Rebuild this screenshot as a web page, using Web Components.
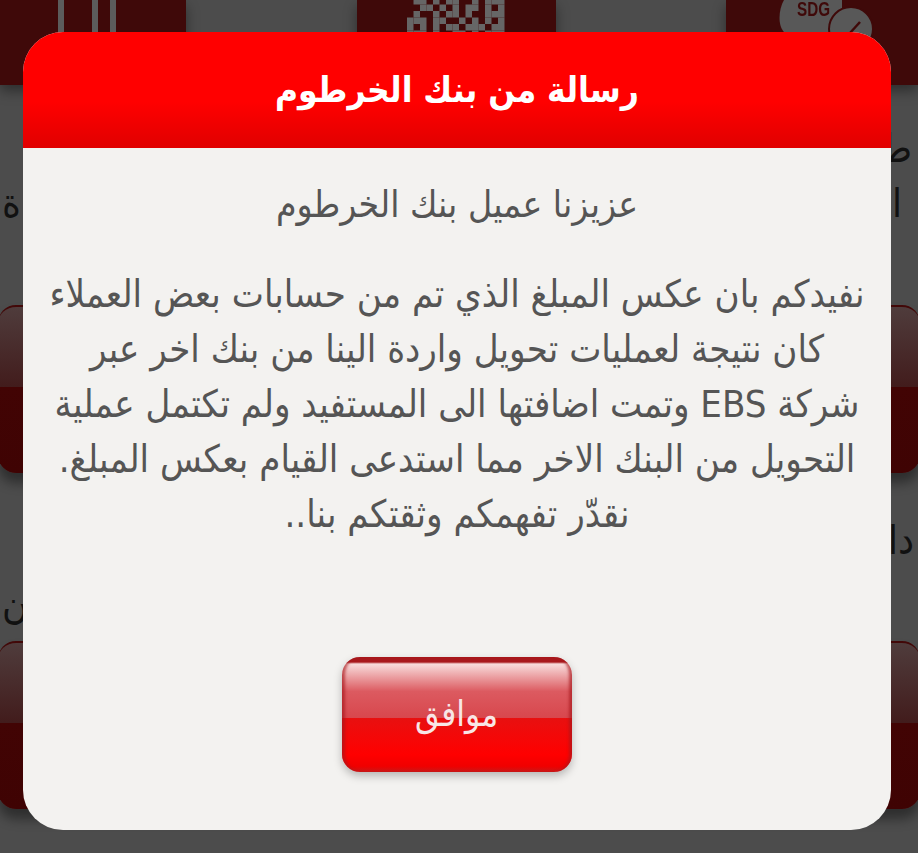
<!DOCTYPE html>
<html lang="ar">
<head>
<meta charset="utf-8">
<title>Message</title>
<style>
  html, body {
    height: 853px;
    margin: 0;
    overflow: hidden;
    width: 918px;
  }

  body {
    background: #4c4c4c;
    font-family: 'DejaVu Sans Condensed', 'DejaVu Sans', sans-serif;
    position: relative;
  }
</style>
</head>
<body>
  <kb-backdrop></kb-backdrop>
  <kb-dialog heading="رسالة من بنك الخرطوم" action="موافق">
    <p class="lead">عزيزنا عميل بنك الخرطوم</p>
    <p>نفيدكم بان عكس المبلغ الذي تم من حسابات بعض العملاء<br>كان نتيجة لعمليات تحويل واردة الينا من بنك اخر عبر<br>شركة EBS وتمت اضافتها الى المستفيد ولم تكتمل عملية<br>التحويل من البنك الاخر مما استدعى القيام بعكس المبلغ.<br>نقدّر تفهمكم وثقتكم بنا..</p>
  </kb-dialog>

<script>
// Dimmed wide menu button behind the dialog
class KbTile extends HTMLElement {
  constructor() {
    super();
    this.attachShadow( {mode: 'open'} );
    this.shadowRoot.innerHTML = `
      <style>
        :host {
          background: linear-gradient( #4f3c3c 0, #421c1c 48%, #420404 48%, #3f0303 100% );
          border-radius: 18px;
          border-top: 2px solid #420808;
          box-shadow: 0 10px 12px #00000066;
          box-sizing: border-box;
          display: block;
          height: 168px;
          margin: 0 -2px;
        }
      </style>
    `;
  }
}
customElements.define( 'kb-tile', KbTile );

// Top row of icon tiles, dimmed
class KbIconRow extends HTMLElement {
  constructor() {
    super();
    this.attachShadow( {mode: 'open'} );

    const qr = [
      '.##.#.##..#.###',
      '..##.#.#.##.#.#',
      '.#..#.##.#..###',
      '###.##..#.#.#.#',
      '#.#.#.##.###.##',
      '###.#..##.#.###',
      '....##.#.#..#..',
      '#.#.#.####.#.##'
    ];
    let cells = '';
    qr.forEach( ( row, y ) => {
      [...row].forEach( ( cell, x ) => {
        if( cell === '#' ) {
          cells += `<rect x="${50 + x * 6.5}" y="${y * 6.5 - 2}" width="6.5" height="6.5"/>`;
        }
      } );
    } );

    this.shadowRoot.innerHTML = `
      <style>
        :host {
          display: grid;
          grid-template-columns: 186px 171px 199px 170px 192px;
          height: 85px;
        }

        div {
          background: #3f0909;
          box-shadow: 0 6px 12px #00000066;
          overflow: hidden;
        }

        span {
          display: block;
        }

        svg {
          display: block;
          filter: blur( 0.6px );
        }
      </style>
      <div>
        <svg width="186" height="85" fill="none" stroke="#5c5c5c" stroke-width="6">
          <path d="M61 0V50M95 0V50M113 0V50"/>
        </svg>
      </div>
      <span></span>
      <div>
        <svg width="199" height="85" fill="#666">${cells}</svg>
      </div>
      <span></span>
      <div>
        <svg width="192" height="85">
          <path d="M58 0C52 10 52 26 58 32H116V0Z" fill="#585858"/>
          <text x="71" y="16" fill="#3f0909" font-family="Liberation Sans" font-size="20" font-weight="700" textLength="33" lengthAdjust="spacingAndGlyphs">SDG</text>
          <circle cx="125" cy="29" r="22" fill="#585858" stroke="#3f0909" stroke-width="2"/>
          <path d="M124 33l10 -11" fill="none" stroke="#3f0909" stroke-width="2.5"/>
        </svg>
      </div>
    `;
  }
}
customElements.define( 'kb-icon-row', KbIconRow );

class KbBackdrop extends HTMLElement {
  constructor() {
    super();
    this.attachShadow( {mode: 'open'} );
    this.shadowRoot.innerHTML = `
      <style>
        :host {
          color: #111;
          display: block;
          font-family: 'DejaVu Sans Condensed', 'DejaVu Sans', sans-serif;
          font-size: 40px;
          height: 853px;
          line-height: 55px;
          overflow: hidden;
        }

        .labels {
          align-content: start;
          box-sizing: border-box;
          display: grid;
          grid-template-columns: 1fr 1fr;
          height: 168px;
        }

        .labels.first {
          height: 220px;
          padding-top: 36px;
        }

        .labels.second {
          padding-top: 40px;
          row-gap: 10px;
        }

        .start {
          grid-column: 2;
          padding-right: 4px;
          text-align: right;
        }

        .end {
          grid-column: 1;
        }

        .foot {
          padding: 43px 375px 0 0;
          text-align: right;
        }
      </style>
      <kb-icon-row></kb-icon-row>
      <div class="labels first">
        <span class="start" style="padding-right: 6px">ط</span>
        <span class="end" style="grid-row: 2; padding-left: 2px">ة</span>
        <span class="start" style="grid-row: 2; padding-right: 16px">ا</span>
      </div>
      <kb-tile></kb-tile>
      <div class="labels second">
        <span class="start">دا</span>
        <span class="end" style="grid-row: 2; padding-left: 2px">ن</span>
      </div>
      <kb-tile></kb-tile>
      <div class="foot">ا</div>
    `;
  }
}
customElements.define( 'kb-backdrop', KbBackdrop );

class KbButton extends HTMLElement {
  constructor() {
    super();
    this.attachShadow( {mode: 'open'} );
    this.shadowRoot.innerHTML = `
      <style>
        :host {
          align-items: center;
          background: linear-gradient( #a8181c 0, #a8181c 5px, #f8dcdc 7px, #dc5a60 30%, #d8474d 53%, #e81010 53%, #ff0000 85%, #f00000 95%, #c81818 100% );
          border-radius: 18px;
          box-shadow: 0 4px 8px #00000040, inset 5px 0 3px -2px #a8181caa, inset -5px 0 3px -2px #a8181caa;
          box-sizing: border-box;
          color: #f8e6e6;
          display: flex;
          font-size: 35px;
          height: 115px;
          justify-content: center;
          padding-bottom: 2px;
          width: 230px;
        }
      </style>
      <slot></slot>
    `;
  }
}
customElements.define( 'kb-button', KbButton );

class KbDialog extends HTMLElement {
  constructor() {
    super();
    const template = document.createElement( 'template' );
    template.innerHTML = `
      <style>
        :host {
          background: #f3f2f0;
          border-radius: 40px;
          box-sizing: border-box;
          color: #555;
          direction: rtl;
          display: flex;
          flex-direction: column;
          font-family: 'DejaVu Sans Condensed', 'DejaVu Sans', sans-serif;
          height: 798px;
          left: 23px;
          overflow: hidden;
          position: absolute;
          top: 32px;
          width: 868px;
        }

        header {
          align-items: center;
          background: linear-gradient( #ff0000 0, #ff0000 60%, #e00000 100% );
          color: #fff;
          display: flex;
          font-size: 35px;
          font-weight: 700;
          height: 116px;
          justify-content: center;
        }

        main {
          flex-grow: 1;
          font-size: 38px;
          line-height: 55px;
          padding: 29px 0 0;
          text-align: center;
          white-space: nowrap;
        }

        ::slotted( p ) {
          margin: 0;
        }

        ::slotted( .lead ) {
          font-size: 37px;
          margin-bottom: 35px;
        }

        footer {
          display: flex;
          justify-content: center;
          padding: 0 1px 58px 0;
        }
      </style>
      <header></header>
      <main><slot></slot></main>
      <footer><kb-button></kb-button></footer>
    `;
    this.attachShadow( {mode: 'open'} );
    this.shadowRoot.appendChild( template.content.cloneNode( true ) );
    this.shadowRoot.querySelector( 'header' ).textContent = this.getAttribute( 'heading' );
    this.shadowRoot.querySelector( 'kb-button' ).textContent = this.getAttribute( 'action' );
  }
}
customElements.define( 'kb-dialog', KbDialog );
</script>
</body>
</html>
